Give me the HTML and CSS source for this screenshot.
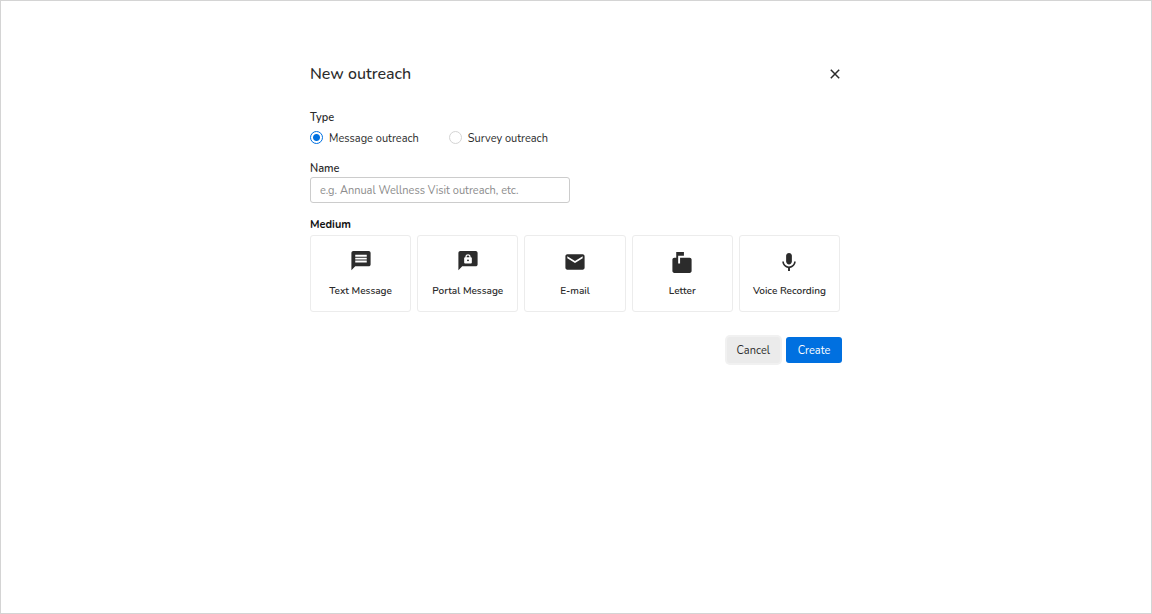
FILE: index.html
```html
<!DOCTYPE html>
<html lang="en">
<head>
<meta charset="utf-8">
<meta name="viewport" content="width=device-width, initial-scale=1">
<title>New outreach</title>
<link rel="stylesheet" href="styles.css">
</head>
<body>
<main class="page">
  <form class="outreach">
    <header class="outreach-header">
      <h1 class="title">New outreach</h1>
      <button class="close" type="button" aria-label="Close">
        <svg viewBox="0 0 10 10" width="10" height="10" aria-hidden="true"><path d="M0.8 0.8 9.2 9.2M9.2 0.8 0.8 9.2" fill="none" stroke="currentColor" stroke-width="1.5"/></svg>
      </button>
    </header>

    <fieldset class="group type-group">
      <legend class="label">Type</legend>
      <div class="radios">
        <label class="radio"><input type="radio" name="type" value="message" checked>Message outreach</label>
        <label class="radio"><input type="radio" name="type" value="survey">Survey outreach</label>
      </div>
    </fieldset>

    <div class="group name-group">
      <label class="label" for="name">Name</label>
      <input class="text-input" id="name" type="text" placeholder="e.g. Annual Wellness Visit outreach, etc.">
    </div>

    <section class="group" aria-labelledby="medium">
      <h2 class="label label-strong" id="medium">Medium</h2>
      <div class="media">
        <button class="medium" type="button">
          <svg class="icon" viewBox="-0.5 1 25 25" aria-hidden="true"><path d="M20 2H4c-1.100 0-2 .9-2 2v18l4-4h14c1.100 0 2-.9 2-2V4c0-1.100-.9-2-2-2zM18 14H6v-2h12v2zm0-3H6V9h12v2zm0-3H6V6h12v2z"/></svg>
          <span>Text Message</span>
        </button>
        <button class="medium" type="button">
          <svg class="icon" viewBox="-0.5 1 25 25" aria-hidden="true"><path fill-rule="evenodd" d="M20 2H4c-1.100 0-2 .9-2 2v18l4-4h14c1.100 0 2-.9 2-2V4c0-1.100-.9-2-2-2zM9.300 8.500V8a2.700 2.700 0 0 1 5.400 0v.5h.3a1 1 0 0 1 1 1V14a1 1 0 0 1-1 1H9a1 1 0 0 1-1-1V9.500a1 1 0 0 1 1-1zm1.300 0h2.800V8a1.400 1.400 0 0 0-2.800 0zM12 10.800a1 1 0 1 0 0 2 1 1 0 0 0 0-2z"/></svg>
          <span>Portal Message</span>
        </button>
        <button class="medium" type="button">
          <svg class="icon" viewBox="-0.5 -0.5 25 25" aria-hidden="true"><path d="M20 4H4c-1.100 0-2 .9-2 2v12c0 1.100.9 2 2 2h16c1.100 0 2-.9 2-2V6c0-1.100-.9-2-2-2zm0 4-8 5-8-5V6l8 5 8-5v2z"/></svg>
          <span>E-mail</span>
        </button>
        <button class="medium" type="button">
          <svg class="icon" viewBox="-0.5 -2 25 25" aria-hidden="true"><path d="M20 6H10v6H8V4h6V0H6v6H4c-1.100 0-2 .9-2 2v12c0 1.100.9 2 2 2h16c1.100 0 2-.9 2-2V8c0-1.100-.9-2-2-2z"/></svg>
          <span>Letter</span>
        </button>
        <button class="medium" type="button">
          <svg class="icon" viewBox="-0.5 -1 25 25" aria-hidden="true"><path d="M12 14c1.660 0 2.990-1.340 2.990-3L15 5c0-1.660-1.340-3-3-3S9 3.340 9 5v6c0 1.660 1.340 3 3 3zm5.300-3c0 3-2.540 5.100-5.300 5.100S6.700 14 6.700 11H5c0 3.410 2.720 6.230 6 6.720V21h2v-3.280c3.280-.48 6-3.300 6-6.720h-1.700z"/></svg>
          <span>Voice Recording</span>
        </button>
      </div>
    </section>

    <footer class="actions">
      <button class="btn btn-cancel" type="button">Cancel</button>
      <button class="btn btn-create" type="submit">Create</button>
    </footer>
  </form>
</main>
</body>
</html>
```
FILE: styles.css
```css
* {
  box-sizing: border-box;
}

body {
  margin: 0;
  background: #fff;
  color: #2b2b2b;
  font: 11px/16px Nunito, Lato, "Open Sans", sans-serif;
}

button,
input {
  font: inherit;
  color: inherit;
}

.page {
  min-height: 100vh;
  padding: 64px 16px;
  border: 1px solid #d4d4d4;
}

.outreach {
  max-width: 532px;
  margin: 0 auto;
}

.outreach-header {
  display: flex;
  align-items: center;
  justify-content: space-between;
  margin-bottom: 27px;
}

.title {
  margin: 0;
  font-size: 16px;
  line-height: 18px;
  font-weight: 500;
}

.close {
  display: flex;
  padding: 2px;
  border: 0;
  background: none;
}

.group {
  margin: 0;
  padding: 0;
  border: 0;
}

.type-group,
.name-group {
  margin-bottom: 14px;
}

.label {
  display: block;
  margin: 0;
  padding: 0;
  font-size: 11px;
  font-weight: 600;
}

.label-strong {
  margin-bottom: 2px;
  font-weight: 700;
  color: #111;
}

.radios {
  display: flex;
  gap: 30px;
  margin-top: 5px;
}

.radio {
  display: flex;
  align-items: flex-start;
  gap: 6px;
}

.radio input {
  appearance: none;
  width: 13px;
  height: 13px;
  margin: 0;
  border: 1px solid #d4d4d4;
  border-radius: 50%;
}

.radio input:checked {
  border-color: #0070e0;
  background: radial-gradient(circle, #0070e0 3px, #fff 4px);
}

.text-input {
  display: block;
  width: 260px;
  max-width: 100%;
  height: 26px;
  padding: 0 9px;
  border: 1px solid #ccc;
  border-radius: 3px;
  background: #fff;
}

.text-input::placeholder {
  color: #8c8c8c;
  opacity: 1;
}

.media {
  display: grid;
  grid-template-columns: repeat(5, 1fr);
  gap: 6px;
  padding-right: 2px;
}

.medium {
  display: flex;
  flex-direction: column;
  align-items: center;
  gap: 9px;
  padding: 14px 0 12px;
  border: 1px solid #ececec;
  border-radius: 3px;
  background: #fff;
  font-size: 10px;
  font-weight: 600;
  line-height: 16px;
  white-space: nowrap;
}

.icon {
  width: 24px;
  height: 24px;
  fill: #2b2b2b;
}

.actions {
  display: flex;
  justify-content: flex-end;
  gap: 6px;
  margin-top: 25px;
}

.btn {
  height: 26px;
  padding: 2px 10px 0;
  border: 0;
  border-radius: 3px;
}

.btn-cancel {
  background: #ebebeb;
  box-shadow: 0 0 0 2px #f1f1f1;
}

.btn-create {
  min-width: 56px;
  background: #0070e0;
  color: #fff;
}
```
